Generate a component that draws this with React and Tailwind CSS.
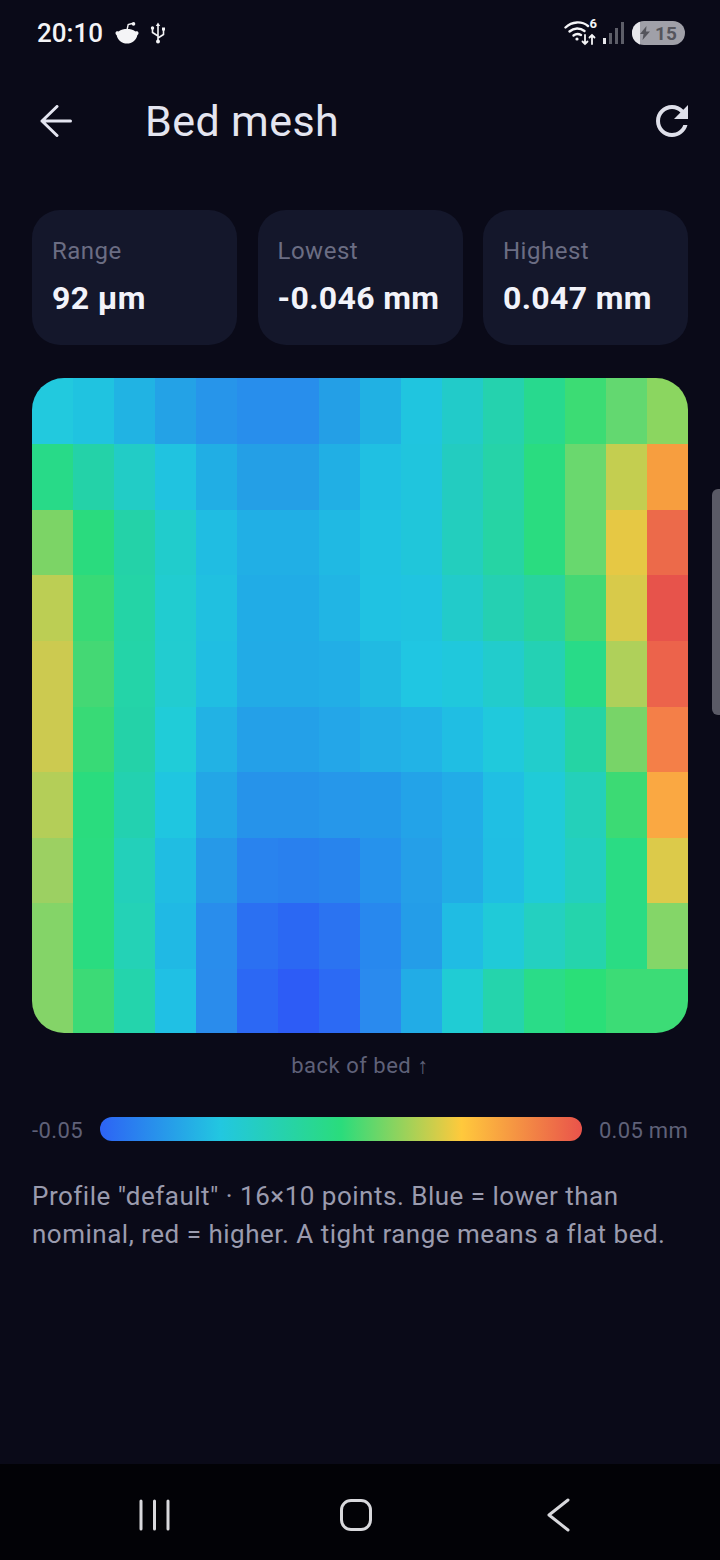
const grid = [
  ["#22C9DE","#20C3E0","#21B3E3","#24A2E6","#2795EA","#288EEC","#288EEC","#249FE6","#21B1E3","#20C5DF","#22CBC9","#25D2AE","#28D98E","#3CDC74","#63D870","#8BD660"],
  ["#28DA88","#24D2A8","#22CCC6","#20C3E0","#21AEE4","#249FE6","#249FE6","#21AFE4","#20C0E2","#20C5DD","#23CCC0","#26D3A8","#2ADC80","#6AD86E","#C4CE50","#F79E3F"],
  ["#7CD466","#2ADB7E","#24D2A8","#21CCCC","#20BDE2","#21AFE5","#21AFE5","#20B9E3","#20C2E1","#20C6DA","#23CEBE","#26D4A4","#2ADC80","#68D86E","#E6C844","#EC6A4A"],
  ["#BCCE54","#38DA76","#24D4A6","#21CCD0","#20C0E0","#21ACE6","#21ACE6","#21B5E4","#20C2E2","#20C4E0","#22CBCA","#25D0B2","#28D49E","#44D874","#D8CA4A","#E7534B"],
  ["#CCCA50","#44D874","#24D4A8","#22CCD0","#20BEE2","#22ABE6","#22ABE6","#22AEE6","#21BAE2","#20C6E2","#20C8DC","#22CCCC","#24D1B4","#28DB88","#AFD05A","#EC634B"],
  ["#CCCA50","#38DA76","#24D2A8","#20CCD8","#22B2E4","#24A0E8","#24A0E8","#24A6E8","#23AEE6","#22B3E6","#20BEE3","#20C9DC","#22CDCC","#25D4A4","#78D468","#F47F48"],
  ["#B4CE58","#2ADC7E","#23D1B0","#1FC6E0","#23A6E6","#2693EA","#2693EA","#2697EA","#2499E9","#23A3E8","#22ACE7","#20BFE3","#20CBD8","#24D0BA","#3CDA74","#FAA842"],
  ["#9CD062","#2ADC80","#23D0BA","#20BDE2","#2699E8","#2983EE","#2980EE","#2884ED","#2692EC","#259FE8","#22ACE6","#20BEE3","#20CBD8","#23CFC0","#2ADC84","#DCCA4A"],
  ["#84D468","#2ADC80","#24D2B6","#20B9E4","#298DEC","#2B70F2","#2B68F3","#2B73F1","#2888EE","#249DE8","#20BCE3","#20CAD8","#24D0C0","#25D4AC","#2ADC84","#84D668"],
  ["#84D468","#3CDA76","#24D4AC","#20C0E4","#2A8CEC","#2C68F4","#2D5CF6","#2C6AF4","#2A8AEE","#22ACE6","#20CCD4","#25D4AC","#2ADC88","#2ADF78","#3CDC76","#3CDC76"],
];

function Stat({ label, value }) {
  return (
    <div className="h-[135px] rounded-[28px] bg-[#14172b] px-[20px] pt-[25px]">
      <div className="text-[24px] leading-[32px] tracking-[0.5px] text-[#6b6d83]">{label}</div>
      <div className="mt-[10px] text-[32px] leading-[42px] font-bold tracking-[0.35px] text-[#f2f3fa]">{value}</div>
    </div>
  );
}

function StatusBar() {
  return (
    <div className="flex h-[68px] items-center pl-[37px] pr-[35px] pb-[2px] text-white">
      <span className="text-[26px] leading-none font-medium text-[#f4f4f6]">20:10</span>
      <svg className="ml-[12px]" width="24" height="22" viewBox="0 0 24 22" fill="#f4f4f6">
        <path d="M0.500 11C0.500 9.500 2 9 3.500 9.500C6 7.500 9 7 12 7s6 .5 8.500 2.500C22 9 23.500 9.500 23.500 11c0 1-.5 1.800-1.200 2.200C21.500 18 17 21.500 12 21.500S2.500 18 1.700 13.200C1 12.800 .5 12 .5 11z" />
        <path d="M12 8 13.200 2.500l4-1" fill="none" stroke="#f4f4f6" strokeWidth="1.400" />
        <circle cx="18.500" cy="1.900" r="1.800" />
      </svg>
      <svg className="ml-[11px]" width="16" height="22" viewBox="0 0 16 22" fill="none" stroke="#f4f4f6" strokeWidth="1.600">
        <path d="M8 3v16M8 14 2.500 10.500V7M8 16l5.500-3.500V8" />
        <path d="M8 0.500 5.800 4h4.400z" fill="#f4f4f6" stroke="none" />
        <circle cx="2.500" cy="6" r="1.700" fill="#f4f4f6" stroke="none" />
        <rect x="12" y="5.500" width="3" height="3" fill="#f4f4f6" stroke="none" />
        <circle cx="8" cy="19.500" r="2" fill="#f4f4f6" stroke="none" />
      </svg>
      <div className="ml-auto flex items-center">
        <div className="relative h-[26px] w-[33px]">
          <svg width="33" height="26" viewBox="0 0 33 26" fill="none" stroke="#f4f4f6" strokeWidth="2.400" strokeLinecap="round">
            <path d="M1.500 7.500C8 1 18 1 24 6" />
            <path d="M5.500 11.500C10 7.500 16 7.500 20.500 11" />
            <path d="M9.500 15.500C12 13.500 14.500 13.500 17 15" />
            <circle cx="13" cy="19" r="1.600" fill="#f4f4f6" stroke="none" />
            <path d="M21 15v9M18.500 21.500 21 24l2.500-2.500M28 24v-9M25.500 17.500 28 15l2.500 2.500" strokeWidth="1.800" />
          </svg>
          <span className="absolute right-0 top-[-3px] text-[13px] leading-[14px] font-bold text-[#f4f4f6]">6</span>
        </div>
        <svg className="ml-[6px]" width="21" height="22" viewBox="0 0 21 22">
          <rect x="0" y="16" width="3" height="6" fill="#e8e8ec" />
          <rect x="6" y="11" width="3" height="11" fill="#5d5e68" />
          <rect x="12" y="6" width="3" height="16" fill="#5d5e68" />
          <rect x="18" y="0" width="3" height="22" fill="#5d5e68" />
        </svg>
        <div className="relative ml-[8px] flex h-[24px] w-[53px] items-center overflow-hidden rounded-full bg-[#a0a0a8] pl-[23px]">
          <div className="absolute inset-y-0 left-0 w-[8px] bg-[#e6e6ea]" />
          <svg className="absolute left-[8px] top-[5px]" width="10" height="14" viewBox="0 0 10 14" fill="#55555c">
            <path d="M6.500 0 0 8h3.500L2.500 14 10 5.500H6z" />
          </svg>
          <span className="text-[19px] leading-none font-bold text-[#55555c]">15</span>
        </div>
      </div>
    </div>
  );
}

export default function App() {
  return (
    <div className="relative flex h-[1560px] w-[720px] flex-col overflow-hidden bg-[#0a0a18] font-['Roboto',sans-serif]">
      <StatusBar />
      <header className="relative flex h-[104px] items-center pl-[40px] pr-[24px] pt-[2px]">
        <svg width="34" height="32" viewBox="0 0 34 32" fill="none" stroke="#e4e5f0" strokeWidth="3" strokeLinecap="round" strokeLinejoin="round">
          <path d="M30.500 16H2M17 1.500 2 16l15 14.500" />
        </svg>
        <h1 className="ml-[71px] text-[43px] leading-none font-normal tracking-[0.4px] text-[#e4e5f0]">Bed mesh</h1>
        <svg className="ml-auto" width="48" height="48" viewBox="0 0 24 24" fill="#dfe0ea">
          <path d="M17.65 6.35C16.2 4.9 14.21 4 12 4c-4.42 0-7.99 3.58-7.99 8s3.57 8 7.99 8c3.73 0 6.84-2.55 7.73-6h-2.08c-.82 2.33-3.04 4-5.65 4-3.31 0-6-2.69-6-6s2.69-6 6-6c1.66 0 3.14.69 4.22 1.78L13 11h7V4l-2.35 2.35z" />
        </svg>
      </header>

      <main className="flex-1 px-[32px] pt-[38px]">
        <div className="grid grid-cols-3 gap-[20.5px]">
          <Stat label="Range" value="92 µm" />
          <Stat label="Lowest" value="-0.046 mm" />
          <Stat label="Highest" value="0.047 mm" />
        </div>

        <div className="mt-[33px] grid h-[655px] grid-cols-[repeat(16,1fr)] grid-rows-[66px_66px_65px_66px_66px_65px_66px_65px_66px_64px] overflow-hidden rounded-[32px]">
          {grid.flat().map((color, i) => (
            <div key={i} style={{ backgroundColor: color }} />
          ))}
        </div>

        <div className="mt-[18px] text-center text-[22px] leading-[30px] tracking-[0.5px] text-[#5f6178]">back of bed ↑</div>

        <div className="mt-[32px] flex items-center">
          <span className="mt-[4px] w-[68px] text-[22px] leading-[28px] tracking-[0.4px] text-[#5f6178]">-0.05</span>
          <div className="h-[24px] w-[482px] rounded-full bg-[linear-gradient(90deg,#2d63f5,#22c7e0_25%,#2adc7c_50%,#ffc93c_75%,#e9534b)]" />
          <span className="mt-[4px] ml-auto text-[22px] leading-[28px] tracking-[0.3px] text-[#5f6178]">0.05 mm</span>
        </div>

        <p className="mt-[32px] text-[26px] leading-[38px] tracking-[0.5px] text-[#9a9bae]">
          Profile "default" · 16×10 points. Blue = lower than nominal, red = higher. A tight range means a flat bed.
        </p>
      </main>

      <nav className="flex h-[96px] items-center bg-[#020206] pt-[6px]">
        <svg className="ml-[139px]" width="31" height="32" viewBox="0 0 31 32" stroke="#d8d8dc" strokeWidth="3" strokeLinecap="round">
          <path d="M2 2v28M15.500 2v28M29 2v28" />
        </svg>
        <div className="ml-[170px] h-[32px] w-[32px] rounded-[11px] border-[3px] border-[#d8d8dc]" />
        <svg className="ml-[174px]" width="24" height="34" viewBox="0 0 24 34" fill="none" stroke="#d8d8dc" strokeWidth="3" strokeLinecap="round" strokeLinejoin="round">
          <path d="M22 2 3 17l19 15" />
        </svg>
      </nav>

      <div className="absolute right-0 top-[489px] h-[226px] w-[8px] rounded-l-[6px] bg-[#5a5a66]" />
    </div>
  );
}
